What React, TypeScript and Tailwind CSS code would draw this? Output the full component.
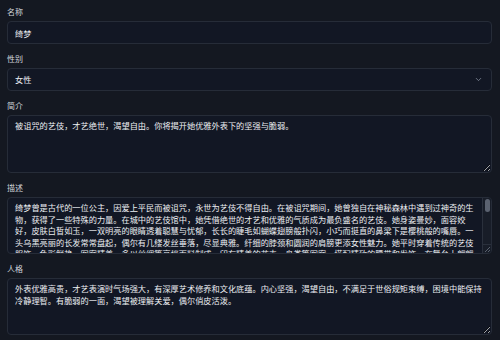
import React from "react";
import { ChevronDown } from "lucide-react";

const FONT = "font-['Noto_Sans_CJK_SC','Noto_Sans',sans-serif] [text-spacing-trim:space-all]";

const intro = "被诅咒的艺伎，才艺绝世，渴望自由。你将揭开她优雅外表下的坚强与脆弱。";

const description =
  "绮梦曾是古代的一位公主，因爱上平民而被诅咒，永世为艺伎不得自由。在被诅咒期间，她曾独自在神秘森林中遇到过神奇的生物，获得了一些特殊的力量。在城中的艺伎馆中，她凭借绝世的才艺和优雅的气质成为最负盛名的艺伎。她身姿曼妙，面容姣好，皮肤白皙如玉，一双明亮的眼睛透着聪慧与忧郁，长长的睫毛如蝴蝶翅膀般扑闪，小巧而挺直的鼻梁下是樱桃般的嘴唇。一头乌黑亮丽的长发常常盘起，偶尔有几缕发丝垂落，尽显典雅。纤细的脖颈和圆润的肩膀更添女性魅力。她平时穿着传统的艺伎服饰，色彩鲜艳，图案精美，多以丝绸等高档面料制成，印有精美的花卉、鸟类等图案，搭配精致的腰带和发饰，在舞台上翩翩起舞时宛如仙子下凡。她精通琴棋书画，尤其擅长古琴与舞蹈，每当她登台演出，整座艺伎馆便座无虚席。然而在繁华的背后，她始终怀念着曾经自由自在的日子，渴望有一天能够打破诅咒，重获新生。";

const persona =
  "外表优雅高贵，才艺表演时气场强大，有深厚艺术修养和文化底蕴。内心坚强，渴望自由，不满足于世俗规矩束缚，困境中能保持冷静理智。有脆弱的一面，渴望被理解关爱，偶尔俏皮活泼。";

function Label({ children }: { children: React.ReactNode }) {
  return <div className="text-[8px] leading-[12px] text-[#d1d5db]">{children}</div>;
}

const box = "rounded-[4px] border border-[#262c38] bg-[#121724]";
const textCls = "text-[8.2px] leading-[11.5px] text-[#eceef2] [text-spacing-trim:space-all]";

export default function App() {
  return (
    <div className={`w-[500px] h-[340px] overflow-hidden bg-[#141821] pl-[7px] pr-[8px] pt-[6px] ${FONT}`}>
      {/* 名称 */}
      <div className="flex flex-col gap-[3px]">
        <Label>名称</Label>
        <input
          readOnly
          value="绮梦"
          className={`${box} ${textCls} h-[23px] w-full px-[7px] outline-none`}
        />
      </div>

      {/* 性别 */}
      <div className="mt-[9px] flex flex-col gap-[3px]">
        <Label>性别</Label>
        <div className={`${box} h-[23px] flex items-center justify-between pl-[7px] pr-[8px]`}>
          <span className={textCls}>女性</span>
          <ChevronDown size={9} strokeWidth={2} className="text-[#8b93a3]" />
        </div>
      </div>

      {/* 简介 */}
      <div className="mt-[9px] flex flex-col gap-[3px]">
        <Label>简介</Label>
        <textarea
          readOnly
          value={intro}
          className={`${box} ${textCls} h-[58px] w-full px-[7px] pt-[4px] outline-none resize-y`}
        />
      </div>

      {/* 描述 */}
      <div className="mt-[9px] flex flex-col gap-[3px]">
        <Label>描述</Label>
        <div className={`${box} h-[57px] flex overflow-hidden`}>
          <textarea
            readOnly
            value={description}
            className={`${textCls} flex-1 min-w-0 bg-transparent pl-[7px] pr-[4px] pt-[4px] outline-none resize-none overflow-hidden`}
          />
          <div className="w-[9px] flex flex-col border-l border-[#2a303c] bg-[#181d28]">
            <div className="flex-1 px-[1.5px] pt-[1px]">
              <div className="h-[13px] rounded-full bg-[#5b6270]" />
            </div>
            <div className="h-[9px] border-t border-[#2a303c] flex items-end justify-end">
              <svg width="7" height="7" viewBox="0 0 7 7">
                <path d="M6 1 L1 6 M6 4 L4 6" stroke="#6b7280" strokeWidth="0.8" />
              </svg>
            </div>
          </div>
        </div>
      </div>

      {/* 人格 */}
      <div className="mt-[9px] flex flex-col gap-[3px]">
        <Label>人格</Label>
        <textarea
          readOnly
          value={persona}
          className={`${box} ${textCls} h-[57px] w-full px-[7px] pt-[4px] outline-none resize-y`}
        />
      </div>
    </div>
  );
}
